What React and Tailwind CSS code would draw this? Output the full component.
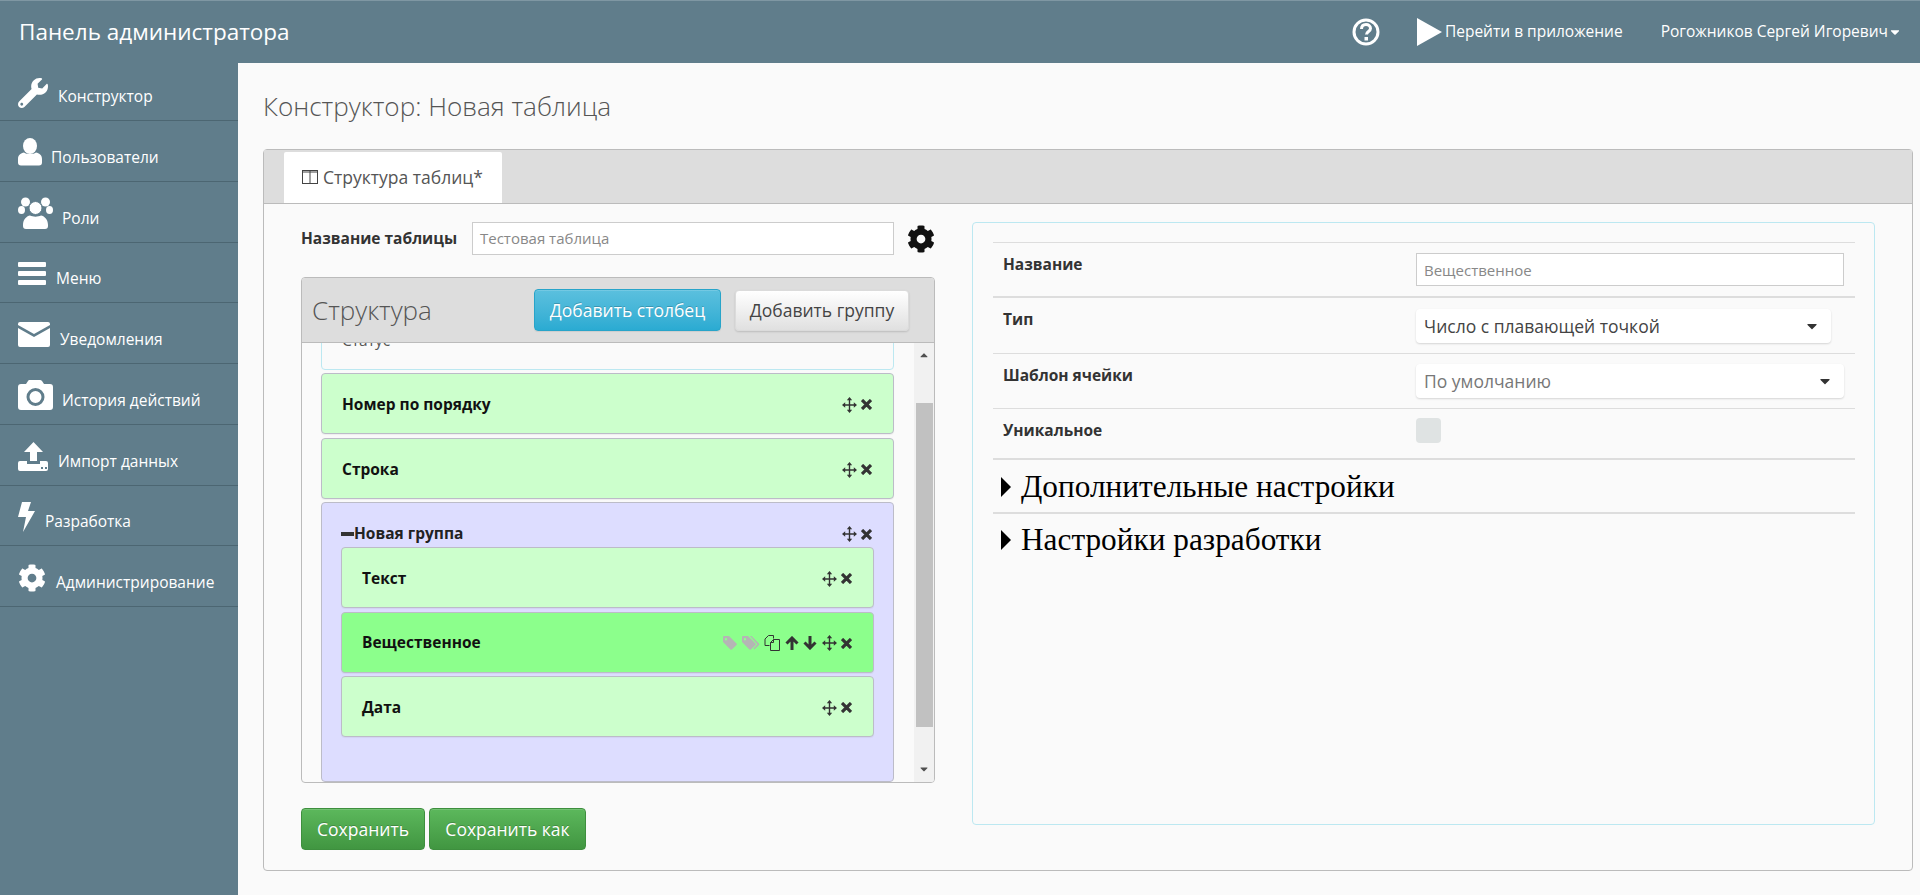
import { FaWrench, FaCog, FaCaretDown, FaCaretUp } from 'react-icons/fa';

const font = { fontFamily: '"Open Sans", sans-serif' };

const UserIcon = () => (
  <svg width="24" height="28" viewBox="0 0 24 28" fill="currentColor">
    <ellipse cx="12" cy="8" rx="7" ry="8" />
    <path d="M0 21c0-4 3-6 6-6.500 3 2 9 2 12 0 3 .5 6 2.500 6 6.500v3.500a3 3 0 0 1-3 3H3a3 3 0 0 1-3-3z" />
  </svg>
);

const UsersIcon = () => (
  <svg width="35" height="32" viewBox="0 0 35 32" fill="currentColor">
    <circle cx="7.500" cy="5" r="4.500" />
    <circle cx="27.500" cy="5" r="4.500" />
    <ellipse cx="3.500" cy="13" rx="3.500" ry="4" />
    <ellipse cx="31.500" cy="13" rx="3.500" ry="4" />
    <circle cx="17.500" cy="11" r="6.500" stroke="#607d8b" strokeWidth="1" />
    <path d="M5 28c0-6 4-9 7-9.500 3 1.500 8 1.500 11 0 3 .5 7 3.500 7 9.500v1a3 3 0 0 1-3 3H8a3 3 0 0 1-3-3z" />
  </svg>
);

const MenuIcon = () => (
  <div className="flex w-[28px] flex-col gap-[4px]">
    <div className="h-[5px] rounded-[1px] bg-white" />
    <div className="h-[5px] rounded-[1px] bg-white" />
    <div className="h-[5px] rounded-[1px] bg-white" />
  </div>
);

const MailIcon = () => (
  <svg width="32" height="25" viewBox="0 0 32 25" fill="currentColor">
    <path d="M2 0h28a2 2 0 0 1 2 2v1L16 12 0 3V2a2 2 0 0 1 2-2z" />
    <path d="M0 6l16 9 16-9v17a2 2 0 0 1-2 2H2a2 2 0 0 1-2-2z" />
  </svg>
);

const CameraIcon = () => (
  <svg width="35" height="30" viewBox="0 0 35 30" fill="currentColor">
    <path fillRule="evenodd" d="M3 4h5l2-3a2 2 0 0 1 2-1h10a3 3 0 0 1 2 1l2 3h6a3 3 0 0 1 3 3v20a3 3 0 0 1-3 3H3a3 3 0 0 1-3-3V7a3 3 0 0 1 3-3zm14.500 4a9 9 0 1 0 0 18 9 9 0 0 0 0-18zm0 3a6 6 0 1 1 0 12 6 6 0 0 1 0-12z" />
  </svg>
);

const ImportIcon = () => (
  <svg width="30" height="29" viewBox="0 0 30 29" fill="currentColor">
    <path fillRule="evenodd" d="M15.500 0l9.500 10h-6v9h-7v-9H6z" />
    <path fillRule="evenodd" d="M2 19h7v3h13v-3h6a2 2 0 0 1 2 2v6a2 2 0 0 1-2 2H2a2 2 0 0 1-2-2v-6a2 2 0 0 1 2-2zm21 6v2h2v-2zm4 0v2h2v-2z" />
  </svg>
);

const FlashIcon = () => (
  <svg width="17" height="30" viewBox="0 0 17 30" fill="currentColor">
    <path d="M4 0h9l-3 9h7L5 30l3-15H0z" />
  </svg>
);

const QuestionIcon = () => (
  <svg width="28" height="28" viewBox="0 0 28 28" fill="none" stroke="currentColor">
    <circle cx="14" cy="14" r="12" strokeWidth="3" />
    <path d="M9.500 11c0-3 2-4.500 4.500-4.500s4.500 1.500 4.500 4c0 3-4 3-4 6" strokeWidth="3" />
    <rect x="12.500" y="19" width="3.500" height="3.500" fill="currentColor" stroke="none" />
  </svg>
);

const ColumnsIcon = () => (
  <svg width="16" height="14" viewBox="0 0 16 14" fill="none" stroke="#444" strokeWidth="1">
    <rect x="0.500" y="0.500" width="15" height="13" />
    <path d="M0.500 2h15M8 1v13" />
  </svg>
);

const MoveIcon = () => (
  <svg width="15" height="16" viewBox="0 0 15 16" fill="#333">
    <path d="M6.800 3h1.400v4.300H12v1.400H8.200V13H6.800V8.700H3V7.300h3.800z" />
    <path d="M7.500 0l2.700 3.200H4.800zM7.500 16l-2.700-3.200h5.400zM0 8l3.200-2.700v5.400zM15 8l-3.200 2.700V5.300z" />
  </svg>
);

const RemoveIcon = () => (
  <svg width="11" height="11" viewBox="0 0 11 11" fill="none" stroke="#333" strokeWidth="3.200">
    <path d="M1 1l9 9M10 1l-9 9" />
  </svg>
);

const ArrowUpIcon = () => (
  <svg width="14" height="14" viewBox="0 0 14 14" fill="none" stroke="#333" strokeWidth="3">
    <path d="M1.500 7.500L7 2l5.500 5.500M7 2v12" />
  </svg>
);

const ArrowDownIcon = () => (
  <svg width="14" height="14" viewBox="0 0 14 14" fill="none" stroke="#333" strokeWidth="3">
    <path d="M1.500 6.500L7 12l5.500-5.500M7 12V0" />
  </svg>
);

const TagIcon = () => (
  <svg width="14" height="14" viewBox="0 0 14 14" fill="#b5b5b5">
    <path fillRule="evenodd" d="M1 0h5l7.500 7.500a1 1 0 0 1 0 1.400l-4.600 4.600a1 1 0 0 1-1.400 0L0 6V1a1 1 0 0 1 1-1zm2 2a1.200 1.200 0 1 0 0 2.400A1.200 1.200 0 0 0 3 2z" />
  </svg>
);

const TagsIcon = () => (
  <svg width="18" height="14" viewBox="0 0 18 14" fill="#b5b5b5">
    <path fillRule="evenodd" d="M1 0h5l7.500 7.500a1 1 0 0 1 0 1.400l-4.600 4.600a1 1 0 0 1-1.400 0L0 6V1a1 1 0 0 1 1-1zm2 2a1.200 1.200 0 1 0 0 2.400A1.200 1.200 0 0 0 3 2z" />
    <path d="M8 0h1.500l7.500 7.500a1 1 0 0 1 0 1.400l-4.600 4.600-1-1 4-4.300z" />
  </svg>
);

const DuplicateIcon = () => (
  <svg width="16" height="16" viewBox="0 0 16 16" fill="none" stroke="#333" strokeWidth="1">
    <path d="M4.500 0.500h5v3M4.500 0.500L1 4v6.500h4.500" />
    <path d="M9.500 4.500h6v11h-9v-8zM6.500 7.500h3v-3" />
  </svg>
);

const MENU = [
  { label: 'Конструктор', icon: <FaWrench size={30} />, gap: 'gap-[10px]', h: 'h-[58px]', top: 'top-[4px]' },
  { label: 'Пользователи', icon: <UserIcon />, gap: 'gap-[9px]' },
  { label: 'Роли', icon: <UsersIcon />, gap: 'gap-[9px]' },
  { label: 'Меню', icon: <MenuIcon />, gap: 'gap-[10px]' },
  { label: 'Уведомления', icon: <MailIcon />, gap: 'gap-[10px]' },
  { label: 'История действий', icon: <CameraIcon />, gap: 'gap-[9px]' },
  { label: 'Импорт данных', icon: <ImportIcon />, gap: 'gap-[10px]' },
  { label: 'Разработка', icon: <FlashIcon />, gap: 'gap-[10px]' },
  { label: 'Администрирование', icon: <FaCog size={28} />, gap: 'gap-[10px]' },
];

function Sidebar() {
  return (
    <aside className="w-[238px] shrink-0 bg-[#607d8b] text-white">
      {MENU.map((item) => (
        <div
          key={item.label}
          className={`flex items-center border-b border-[#4c6672] pl-[18px] pt-[3px] ${item.gap} ${item.h || 'h-[60.750px]'}`}
        >
          {item.icon}
          <span className={`relative text-[15.500px] ${item.top || 'top-[5px]'}`}>{item.label}</span>
        </div>
      ))}
    </aside>
  );
}

function Column({ name, selected }) {
  return (
    <div
      className={`flex h-[61px] items-center justify-between rounded-[4px] border border-[#bcbcc8] pl-[20px] pr-[21px] pt-[2px] shadow-[0_1px_1px_rgba(0,0,0,0.05)] ${
        selected ? 'bg-[#8cff8c]' : 'bg-[#ccffcc]'
      }`}
    >
      <span className="text-[15.500px] font-bold text-[#111]">{name}</span>
      <div className="flex items-center gap-[4.500px]">
        {selected && (
          <>
            <TagIcon />
            <TagsIcon />
            <DuplicateIcon />
            <ArrowUpIcon />
            <ArrowDownIcon />
          </>
        )}
        <MoveIcon />
        <RemoveIcon />
      </div>
    </div>
  );
}

function FormRow({ label, height, thick, children }) {
  return (
    <div className={`flex ${height} ${thick ? 'border-b-2' : 'border-b'} border-[#ddd]`}>
      <div className="w-[413px] pl-[10px] pt-[9px] text-[15.500px] font-bold leading-[24px] text-[#333]">{label}</div>
      <div className="flex-1 pl-[10px] pr-[11px]">{children}</div>
    </div>
  );
}

function Select({ value, muted, className }) {
  return (
    <div
      className={`flex h-[34px] items-center justify-between rounded-[4px] bg-white pl-[8px] pr-[11px] text-[17.500px] shadow-[0_1px_2px_rgba(0,0,0,0.15)] ${className} ${
        muted ? 'text-[#777]' : 'text-[#444]'
      }`}
    >
      {value}
      <FaCaretDown size={16} className="text-[#333]" />
    </div>
  );
}

function Accordion({ title, className }) {
  return (
    <div className={`flex items-center pl-[8px] text-black ${className}`}>
      <svg width="10" height="20" viewBox="0 0 10 20" fill="black" className="mr-[10px]">
        <path d="M0 0l10 10L0 20z" />
      </svg>
      <span className="text-[31.300px]" style={{ fontFamily: '"Liberation Serif", serif' }}>
        {title}
      </span>
    </div>
  );
}

export default function App() {
  return (
    <div className="flex h-[895px] flex-col overflow-hidden bg-[#fafafa]" style={font}>
      {/* Top bar */}
      <header className="flex h-[63px] shrink-0 items-center justify-between border-t border-[#7f97a3] bg-[#607d8b] pl-[19px] pr-[18px] text-white">
        <div className="text-[22.500px]">Панель администратора</div>
        <div className="flex items-center">
          <QuestionIcon />
          <svg width="25" height="28" viewBox="0 0 26 29" fill="white" className="ml-[37px]">
            <path d="M0 0l26 14.500L0 29z" />
          </svg>
          <span className="ml-[3px] text-[15.500px]">Перейти в приложение</span>
          <span className="ml-[38px] text-[15.500px]">Рогожников Сергей Игоревич</span>
          <FaCaretDown size={14} />
        </div>
      </header>

      <div className="flex flex-1">
        <Sidebar />

        <main className="flex-1 pl-[25px] pr-[7px] pt-[27px]">
          <h1 className="text-[26.100px] font-light leading-[32px] text-[#555]">Конструктор: Новая таблица</h1>

          <div className="mt-[27px] h-[722px] rounded-[4px] border border-[#bbb]">
            {/* Tabs */}
            <div className="flex h-[54px] border-b border-[#bbb] bg-[#ddd] pl-[20px] pt-[2px]">
              <div className="flex w-[218px] items-center gap-[5px] rounded-t-[2px] bg-white pb-[1px] pl-[18px] text-[17.500px] text-[#555]">
                <ColumnsIcon />
                Структура таблиц*
              </div>
            </div>

            <div className="flex">
              {/* Left column */}
              <div className="ml-[37px] mt-[18px] w-[634px]">
                <div className="flex h-[33px] items-center">
                  <label className="w-[171px] text-[15.500px] font-bold text-[#333]">Название таблицы</label>
                  <div className="flex h-full w-[422px] items-center border border-[#ccc] bg-white pl-[7px] text-[15px] text-[#888]">
                    Тестовая таблица
                  </div>
                  <FaCog size={28} className="ml-[13px] text-[#111]" />
                </div>

                <div className="mt-[22px] h-[506px] overflow-hidden rounded-[4px] border border-[#bbb]">
                  <div className="flex h-[65px] items-center justify-between border-b border-[#bbb] bg-[#ddd] pl-[10px] pr-[25px]">
                    <div className="text-[26px] font-light text-[#555]">Структура</div>
                    <div className="flex items-center gap-[14px]">
                      <button className="h-[42px] w-[187px] rounded-[4px] border border-[#28a4c9] bg-gradient-to-b from-[#5bc0de] to-[#2aabd2] text-[17.500px] text-white shadow-[inset_0_1px_0_rgba(255,255,255,0.15),0_1px_1px_rgba(0,0,0,0.075)] [text-shadow:0_-1px_0_rgba(0,0,0,0.2)]">
                        Добавить столбец
                      </button>
                      <button className="h-[41px] w-[174px] rounded-[4px] border border-[#dbdbdb] bg-gradient-to-b from-white to-[#e0e0e0] text-[17.500px] text-[#444] shadow-[0_1px_2px_rgba(0,0,0,0.15)]">
                        Добавить группу
                      </button>
                    </div>
                  </div>

                  <div className="flex h-[439px]">
                    <div className="flex-1 overflow-hidden pl-[19px] pr-[20px]">
                      <div className="-mt-[34px] flex flex-col gap-[4px]">
                        <div className="-mb-[1px] flex h-[61px] items-start rounded-[4px] border border-[#bce8f1] pl-[20px] pt-[19px] text-[15.500px] text-[#555]">
                          Статус
                        </div>
                        <Column name="Номер по порядку" />
                        <Column name="Строка" />

                        <div className="-mt-[1px] h-[280px] rounded-[4px] border border-[#bcbcc8] bg-[#ddddff] pl-[19px] pr-[19px] pt-[19px]">
                          <div className="flex h-[24px] items-center justify-between pr-[2px]">
                            <div className="flex items-center text-[15.500px] font-bold text-[#222]">
                              <span className="h-[4px] w-[13px] bg-[#333]" />
                              Новая группа
                            </div>
                            <div className="flex items-center gap-[4.500px]">
                              <MoveIcon />
                              <RemoveIcon />
                            </div>
                          </div>
                          <div className="mt-[1px] flex flex-col gap-[3.500px]">
                            <Column name="Текст" />
                            <Column name="Вещественное" selected />
                            <Column name="Дата" />
                          </div>
                        </div>
                      </div>
                    </div>

                    {/* Scrollbar */}
                    <div className="flex w-[20px] flex-col items-center bg-[#f1f1f1]">
                      <FaCaretUp size={12} className="mt-[6px] text-[#505050]" />
                      <div className="mt-[42px] h-[324px] w-[17px] bg-[#c1c1c1]" />
                      <FaCaretDown size={12} className="mt-[36px] text-[#505050]" />
                    </div>
                  </div>
                </div>

                <div className="mt-[25px] flex gap-[4px]">
                  <button className="h-[42px] w-[124px] rounded-[4px] border border-[#3e8f3e] bg-gradient-to-b from-[#5cb85c] to-[#419641] text-[17.500px] text-white shadow-[inset_0_1px_0_rgba(255,255,255,0.15)] [text-shadow:0_-1px_0_rgba(0,0,0,0.2)]">
                    Сохранить
                  </button>
                  <button className="h-[42px] w-[157px] rounded-[4px] border border-[#3e8f3e] bg-gradient-to-b from-[#5cb85c] to-[#419641] text-[17.500px] text-white shadow-[inset_0_1px_0_rgba(255,255,255,0.15)] [text-shadow:0_-1px_0_rgba(0,0,0,0.2)]">
                    Сохранить как
                  </button>
                </div>
              </div>

              {/* Right column */}
              <div className="ml-[37px] mt-[18px] h-[603px] w-[903px] rounded-[4px] border border-[#bce8f1] pl-[20px] pr-[19px] pt-[19px]">
                <div className="border-t border-[#ddd]">
                  <FormRow label="Название" height="h-[55px]" thick>
                    <div className="mt-[10px] flex h-[33px] items-center border border-[#ccc] bg-white pl-[7px] pt-[1px] text-[15px] text-[#888]">
                      Вещественное
                    </div>
                  </FormRow>
                  <FormRow label="Тип" height="h-[56px]">
                    <div className="pt-[11px]">
                      <Select value="Число с плавающей точкой" className="w-[415px]" />
                    </div>
                  </FormRow>
                  <FormRow label="Шаблон ячейки" height="h-[55px]">
                    <div className="pt-[10px]">
                      <Select value="По умолчанию" muted />
                    </div>
                  </FormRow>
                  <FormRow label="Уникальное" height="h-[51px]" thick>
                    <div className="mt-[9px] h-[25px] w-[25px] rounded-[4px] bg-[#dfe3e3]" />
                  </FormRow>
                </div>
                <Accordion title="Дополнительные настройки" className="h-[54px] border-b-2 border-[#ddd] pt-[2px]" />
                <Accordion title="Настройки разработки" className="h-[52px]" />
              </div>
            </div>
          </div>
        </main>
      </div>
    </div>
  );
}
